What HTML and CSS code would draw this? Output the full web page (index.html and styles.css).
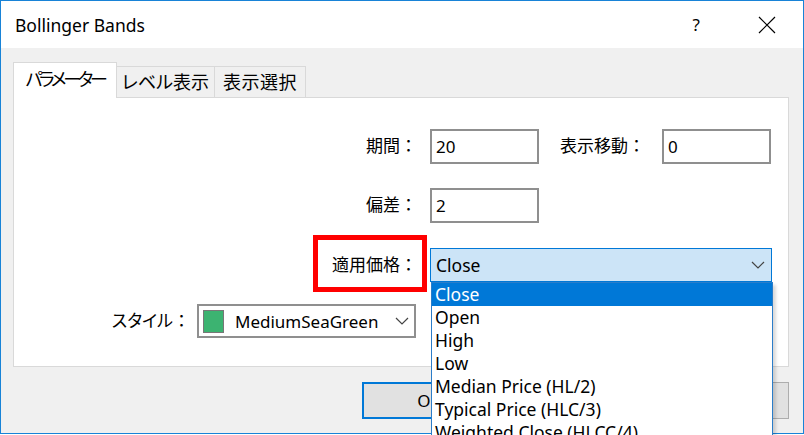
FILE: index.html
```html
<!DOCTYPE html>
<html>
<head>
  <meta charset="UTF-8">
  <title>Bollinger Bands</title>
  <link rel="stylesheet" href="styles.css">
</head>
<body>
  <div class="window">
    <div class="titlebar">
      <span class="title">Bollinger Bands</span>
      <span class="help">?</span>
      <svg class="close" width="18" height="18" viewBox="0 0 18 18"><path d="M1 1L17 17M17 1L1 17" stroke="#000" stroke-width="1.2" fill="none"/></svg>
    </div>
    <div class="client">
      <div class="tabs">
        <div class="tab active">パラメーター</div>
        <div class="tab">レベル表示</div>
        <div class="tab">表示選択</div>
      </div>
      <div class="panel">
        <div class="row row1">
          <label class="lbl lbl-main">期間：</label>
          <div class="edit">20</div>
          <label class="lbl lbl-shift">表示移動：</label>
          <div class="edit">0</div>
        </div>
        <div class="row row2">
          <label class="lbl lbl-main">偏差：</label>
          <div class="edit">2</div>
        </div>
        <div class="row row3">
          <label class="lbl lbl-main"><span class="mark">適用価格：</span></label>
          <div class="combo open">
            <span>Close</span>
            <svg class="chev" width="14" height="8" viewBox="0 0 14 8"><path d="M1 1L7 7L13 1" stroke="#444" stroke-width="1.2" fill="none"/></svg>
            <ul class="list">
              <li class="sel">Close</li>
              <li>Open</li>
              <li>High</li>
              <li>Low</li>
              <li>Median Price (HL/2)</li>
              <li>Typical Price (HLC/3)</li>
              <li>Weighted Close (HLCC/4)</li>
            </ul>
          </div>
        </div>
        <div class="row row4">
          <label class="lbl lbl-style"><span class="kana">スタイル</span>：</label>
          <div class="combo style">
            <span class="swatch"></span>
            <span>MediumSeaGreen</span>
            <svg class="chev" width="14" height="8" viewBox="0 0 14 8"><path d="M1 1L7 7L13 1" stroke="#444" stroke-width="1.2" fill="none"/></svg>
          </div>
        </div>
      </div>
      <div class="buttons">
        <div class="btn default">OK</div>
        <div class="btn"></div>
        <div class="btn"></div>
      </div>
    </div>
  </div>
</body>
</html>
```

FILE: styles.css
```css
html, body {margin: 0; height: 100%; overflow: hidden; background: #fff;}
body {font-family: "Noto Sans", "Noto Sans CJK JP", sans-serif; color: #000; font-size: 16px;}

.window {width: 802px; height: 432px; border: 1px solid #1883d7; background: #f0f0f0; display: flex; flex-direction: column;}
.titlebar {height: 47px; background: #fff; display: flex; align-items: center; padding-left: 14px;}
.title {font-size: 17.5px; flex: 1;}
.help {font-size: 17px; margin-right: 58px;}
.close {margin-right: 27px;}

.client {padding: 14px 14px 0 12px;}
.tabs {display: flex; height: 35px; align-items: flex-end; position: relative; z-index: 1; font-feature-settings: "palt";}
.tab {height: 31px; box-sizing: border-box; border: 1px solid #d9d9d9; border-bottom: 0; border-left: 0; padding: 0 0 3px; display: flex; align-items: center; justify-content: center; font-size: 18px; background: #f0f0f0;}
.tab.active {height: 36px; margin-bottom: -1px; background: #fff; border-left: 1px solid #d9d9d9; width: 104px; padding-bottom: 6px; letter-spacing: -3.3px;}
.tab:nth-child(2) {width: 98px;}
.tab:nth-child(3) {width: 91px; font-feature-settings: normal; letter-spacing: 0.5px;}

.panel {height: 270px; box-sizing: border-box; border: 1px solid #d9d9d9; background: #fff; padding-top: 31px;}
.row {display: flex; align-items: center;}
.row2 {margin-top: 24px;}
.row3 {margin-top: 25px;}
.row4 {margin-top: 22px;}
.lbl {text-align: right; font-size: 17px; padding-right: 13px; padding-bottom: 4px; box-sizing: border-box;}
.lbl-main {width: 416px;}
.lbl-shift {width: 123px; padding-right: 17px;}
.lbl-style {width: 183px; padding-right: 7px;}
.kana {font-feature-settings: "palt";}

.edit {width: 109px; height: 35px; box-sizing: border-box; border: 2px solid #8f8f8f; padding-left: 4px; display: flex; align-items: center; font-size: 17px;}

.mark {display: inline-block; border: 5px solid #f00; padding: 11px 5px 11px 14px; margin: -16px -10px -16px 0;}

.combo {height: 34px; box-sizing: border-box; display: flex; align-items: center; font-size: 17.5px; position: relative;}
.combo.open {width: 342px; border: 1px solid #0078d7; background: #cce4f7; padding-left: 5px;}
.combo.open span {flex: 1;}
.combo.open .chev {margin-right: 6px;}
.combo.style {width: 219px; border: 2px solid #8f8f8f; padding-left: 4px; font-size: 17px;}
.combo.style span:nth-of-type(2) {flex: 1;}
.combo.style .chev {margin-right: 5px;}
.swatch {width: 19px; height: 21px; background: #3cb371; border: 1px solid #777; margin-right: 11px;}

.list {position: absolute; left: 0; top: 33px; width: 340px; margin: 0; padding: 0; list-style: none; background: #fff; border: 1px solid #2b7dc9; box-shadow: 3px 3px 3px rgba(0,0,0,0.15); z-index: 5;}
.list li {height: 23px; line-height: 23px; padding-left: 3px;}
.list li.sel {background: #0078d7; color: #fff;}

.buttons {display: flex; gap: 12px; padding: 15px 0 0 349px;}
.btn {width: 135px; height: 37px; box-sizing: border-box; border: 1px solid #adadad; background: #e1e1e1; display: flex; align-items: center; justify-content: center; font-size: 17px;}
.btn.default {border: 2px solid #0078d7;}
```
